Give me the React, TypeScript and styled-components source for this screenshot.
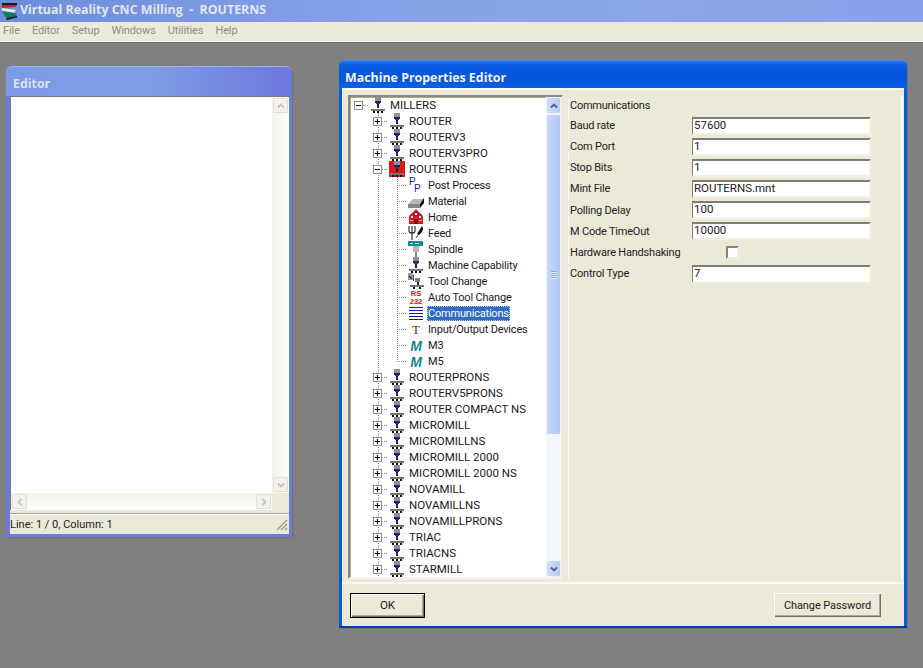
import React from "react";
import styled, { createGlobalStyle, css } from "styled-components";

const UI = `Roboto, "Liberation Sans", Arial, sans-serif`;

const Global = createGlobalStyle`
  html, body { margin: 0; padding: 0; height: 100%; overflow: hidden; }
  body { font-family: ${UI}; font-size: 11px; color: #111; background: #808080; }
  #root { height: 100%; }
`;

const Screen = styled.div`
  width: 923px; height: 668px; display: flex; flex-direction: column; overflow: hidden;
`;
const AppBar = styled.header`
  height: 22px; display: flex; align-items: center; gap: 1px; padding-left: 1px; flex: none;
  background: linear-gradient(to right, #6f8cdc 0%, #86a3e8 45%, #8ba6ea 70%, #87a2e8 100%);
`;
const AppTitle = styled.span`
  font: bold 12.4px "Open Sans", "Liberation Sans", sans-serif; color: #dfe8f8; white-space: pre; margin-bottom: 4px;
`;
const MenuBar = styled.nav`
  height: 18px; flex: none; display: flex; align-items: center; gap: 12px; padding: 0 0 2px 3px; box-sizing: content-box;
  height: 17px; background: #ece9d8; border-bottom: 1px solid #fff; box-shadow: 0 1px 0 #6c6c64;
`;
const MenuItem = styled.span` color: #8f8e85; font-size: 11px; letter-spacing: -0.1px; `;
const Desktop = styled.main` flex: 1; position: relative; background: #808080; margin-top: 1px; `;

const Win = styled.section<{ $x: number; $y: number; $w: number; $h: number }>`
  position: absolute; left: ${p => p.$x}px; top: ${p => p.$y}px; width: ${p => p.$w}px; height: ${p => p.$h}px;
  box-sizing: border-box; display: flex; flex-direction: column;
`;
const EditorWin = styled(Win)`
  background: #6c7bdc; padding: 0 3px 3px 4px; border-radius: 6px 6px 0 0; box-shadow: 1px 1px 1px #70707a;
`;
const EditorTitle = styled.div`
  height: 30px; flex: none; margin: 0 -3px 0 -4px; padding: 4px 0 0 7px; box-sizing: border-box;
  display: flex; align-items: center; border-radius: 6px 6px 0 0;
  font: bold 12.4px "Open Sans", "Liberation Sans", sans-serif; color: #d8e2f6;
  background: linear-gradient(to right, #7d9ae4 0%, #7f9ce6 50%, #6d78dc 100%);
  border-top: 1px solid #9db2ee;
`;
const EditorBody = styled.div`
  flex: 1; display: flex; flex-direction: column; background: #ece9d8; min-height: 0;
`;
const EditArea = styled.div`
  flex: 1; display: grid; grid-template-columns: 1fr 17px; grid-template-rows: 1fr 17px; min-height: 0;
  border-top: 1px solid #77776f; border-left: 1px solid #77776f; background: #fff;
`;
const Paper = styled.div` background: #fff; `;
const PaleTrack = styled.div<{ $horizontal?: boolean }>`
  display: flex; justify-content: space-between; padding: 1px;
  flex-direction: ${p => (p.$horizontal ? "row" : "column")};
  background: ${p => p.$horizontal ? "linear-gradient(#f4f3ec,#fdfdfb)" : "linear-gradient(to right,#f4f3ec,#fdfdfb)"};
`;
const PaleBtn = styled.div`
  width: 15px; height: 15px; box-sizing: border-box; border: 1px solid #e2e0d3; background: #f2f1ea;
  display: flex; align-items: center; justify-content: center; border-radius: 1px;
`;
const Corner = styled.div` background: #ece9d8; `;
const Status = styled.footer`
  height: 20px; flex: none; display: flex; align-items: center; justify-content: space-between;
  padding: 0 1px 0 0; border-top: 1px solid #a5a39a; box-shadow: inset 0 1px 0 #fff; margin-top: 3px;
  font-size: 11px; color: #222; background: #ece9d8;
`;

const DialogWin = styled(Win)`
  background: #0a5ad8; border-radius: 6px 6px 0 0; padding: 0 3px; box-shadow: 1px 1px 0 #707078;
  border-bottom: 2px solid #003aa8;
`;
const DialogTitle = styled.div`
  height: 30px; flex: none; margin: 0 -3px; padding: 4px 0 0 6px; box-sizing: border-box; border-radius: 6px 6px 0 0;
  display: flex; align-items: center; color: #f2f6ff;
  font: bold 12.4px "Open Sans", "Liberation Sans", sans-serif;
  background: linear-gradient(#2a78e8 0%, #0a5fe2 12%, #0454dc 55%, #0a63e6 100%);
  border-top: 1px solid #3c8af0;
`;
const DialogBody = styled.div`
  flex: 1; min-height: 0; background: #ece9d8; display: flex; flex-direction: column;
`;
const Split = styled.div`
  flex: none; display: flex; gap: 5px; padding: 5px 0 3px 6px; border-top: 2px solid #fbfaf3; border-bottom: 2px solid #fbfaf3;
  margin-top: -2px;
`;
const TreeBox = styled.div`
  width: 215px; height: 484px; box-sizing: border-box; flex: none; display: flex;
  background: #fff; border: 2px solid; border-color: #8c8a7e #ece9d8 #f5f4ec #8c8a7e; box-shadow: inset 1px 1px 0 #a8a698;
`;
const TreeList = styled.ul`
  flex: 1; margin: 0; padding: 0; list-style: none; overflow: hidden; min-width: 0;
`;
const Row = styled.li` height: 16px; display: flex; align-items: center; white-space: nowrap; `;
const dotV = css`repeating-linear-gradient(to bottom, #8c8c8c 0 1px, transparent 1px 2px)`;
const dotH = css`repeating-linear-gradient(to right, #8c8c8c 0 1px, transparent 1px 2px)`;
const Cell = styled.span<{ $v?: "full" | "half"; $h?: boolean }>`
  width: 19px; height: 16px; flex: none; display: flex; align-items: center; justify-content: flex-start;
  padding-left: 4px; box-sizing: border-box;
  background-repeat: no-repeat;
  background-image: ${p => (p.$v ? dotV : "none")}, ${p => (p.$h ? dotH : "none")};
  background-size: 1px ${p => (p.$v === "half" ? "8px" : "16px")}, 10px 1px;
  background-position: 9px 0, 9px 8px;
`;
const Expander = styled.span`
  width: 9px; height: 9px; box-sizing: border-box; border: 1px solid #8f8f8f; background: #fff; position: relative;
  &::before { content: ""; position: absolute; left: 1px; right: 1px; top: 3px; height: 1px; background: #000; }
`;
const ExpanderPlus = styled(Expander)`
  &::after { content: ""; position: absolute; top: 1px; bottom: 1px; left: 3px; width: 1px; background: #000; }
`;
const IconSlot = styled.span`
  width: 16px; height: 16px; flex: none; margin-left: 1px; display: flex;
`;
const Label = styled.span<{ $selected?: boolean }>`
  margin-left: ${p => (p.$selected ? "3px" : "4px")};
  font-size: 11.5px; color: #1a1a1a; line-height: 15px;
  ${p => p.$selected && css`
    background: #316ac5; padding: 0 1px; outline: 1px dotted #c8d4ea; outline-offset: -1px;
  `}
`;
const SubLabel = styled(Label)`
  font-size: 11px; letter-spacing: -0.2px;
  ${p => p.$selected && css` color: #fff; `}
`;
const Bar = styled.div`
  width: 15px; flex: none; display: flex; flex-direction: column; margin: 0 0 0 auto; background: #f3f6fd;
`;
const BarBtn = styled.div`
  height: 17px; flex: none; box-sizing: border-box; display: flex; align-items: center; justify-content: center;
  background: linear-gradient(to right, #cfdcfb, #b9cbf6); border: 1px solid #eef3ff; border-radius: 2px;
`;
const Thumb = styled.div`
  height: 321px; flex: none; box-sizing: border-box; background: linear-gradient(to right, #c9d8fb, #b2c7f6);
  border: 1px solid #eef3ff; border-radius: 2px; display: flex; align-items: center; justify-content: center;
`;
const Grip = styled.div`
  width: 6px; height: 8px; background: repeating-linear-gradient(to bottom, #8fa8e6 0 1px, #e6edfd 1px 2px);
`;
const BarSpace = styled.div` flex: 1; `;

const Props = styled.div`
  flex: 1; margin-right: 1px; height: 484px; box-sizing: border-box; padding: 1px 0 0 0;
  border-left: 1px solid #fbfaf3; border-right: 2px solid #fbfaf3;
  display: flex; flex-direction: column;
`;
const PropsHead = styled.div`
  height: 15px; font-size: 11px; letter-spacing: -0.25px; color: #222; display: flex; align-items: center; margin: 2px 0 2px 1px;
`;
const PropRow = styled.div`
  height: 21.15px; display: grid; grid-template-columns: 122px 179px; align-items: center; padding-left: 1px;
  font-size: 11px; letter-spacing: -0.2px; color: #222;
`;
const Field = styled.div`
  height: 18px; box-sizing: border-box; background: #fff; border: 2px solid; border-color: #7f7d72 #f3f1e6 #f3f1e6 #7f7d72;
  padding: 0 0 0 1px; line-height: 13px; font-size: 11.5px; letter-spacing: 0; color: #222; border-left-width: 1px;
`;
const Check = styled.div`
  width: 13px; height: 13px; box-sizing: border-box; margin-left: 34px; background: #fff;
  border: 2px solid; border-color: #85837a #eeece0 #eeece0 #85837a;
`;
const Buttons = styled.div`
  flex: 1; display: flex; align-items: center; justify-content: space-between;
  padding: 0 23px 0 8px;
`;
const OkButton = styled.button`
  width: 75px; height: 25px; background: #ece9d8; border: 1px solid #000; padding: 0; box-sizing: border-box;
  box-shadow: inset 1px 1px 0 #fff, inset -1px -1px 0 #716f64, inset -2px -2px 0 #aca899;
  font: 11.5px ${UI}; color: #222;
`;
const PlainButton = styled.button`
  width: 107px; height: 24px; background: #ece9d8; border: 0; padding: 0; box-sizing: border-box;
  box-shadow: inset 1px 1px 0 #fff, inset -1px -1px 0 #716f64, inset -2px -2px 0 #aca899;
  font: 11px ${UI}; letter-spacing: -0.1px; color: #222;
`;
const ResizeGrip = styled.svg` flex: none; `;

const Caret = ({ dir, color = "#4d6185", pale }: { dir: "up" | "down" | "left" | "right"; color?: string; pale?: boolean }) => {
  const d = { up: "M2 6.5 L5 3.5 L8 6.5", down: "M2 3.5 L5 6.5 L8 3.5", left: "M6.5 2 L3.5 5 L6.5 8", right: "M3.5 2 L6.5 5 L3.5 8" }[dir];
  return (
    <svg width="10" height="10" viewBox="0 0 10 10">
      <path d={d} fill="none" stroke={pale ? "#c5c4bc" : color} strokeWidth="1.8" />
    </svg>
  );
};

const Machine = ({ red }: { red?: boolean }) => (
  <svg width="16" height="16" viewBox="0 0 16 16">
    {red && <rect x="0" y="0" width="16" height="16" fill="#e01818" />}
    <rect x="5" y="0" width="6" height="4" fill="#8e8e96" />
    <rect x="5" y="4" width="6" height="2" fill="#1c1c8c" />
    <rect x="6" y="6" width="4" height="1" fill="#444" />
    <rect x="7" y="7" width="2" height="4" fill="#222" />
    <rect x="1" y="12" width="14" height="2" fill="#77776e" />
    <rect x="3" y="14" width="2" height="2" fill="#111" />
    <rect x="7" y="14" width="2" height="2" fill="#111" />
    <rect x="11" y="14" width="2" height="2" fill="#111" />
  </svg>
);

const SubIcon = ({ kind }: { kind: string }) => {
  switch (kind) {
    case "pp":
      return (
        <svg width="16" height="16" viewBox="0 0 16 16">
          <text x="1" y="8" fontFamily="Liberation Sans" fontSize="10" fill="#1a1aa8">P</text>
          <text x="6" y="15" fontFamily="Liberation Sans" fontSize="10" fill="#1a1aa8">P</text>
        </svg>
      );
    case "material":
      return (
        <svg width="16" height="16" viewBox="0 0 16 16">
          <path d="M0 11 L5 6 H16 L12 11 Z" fill="#b8b8b8" />
          <path d="M0 11 H12 V15 H0 Z" fill="#858585" />
          <path d="M12 11 L16 5 V10 L12 15 Z" fill="#000" />
        </svg>
      );
    case "home":
      return (
        <svg width="16" height="16" viewBox="0 0 16 16">
          <path d="M1 7 L8 0 L15 7 V15 H1 Z" fill="#d81820" />
          <rect x="3" y="7" width="2" height="2" fill="#fff" /><rect x="7" y="4" width="2" height="2" fill="#fff" /><rect x="11" y="7" width="2" height="2" fill="#fff" />
          <rect x="6.5" y="10" width="3" height="5" fill="#701010" />
          <rect x="2" y="11" width="3" height="1" fill="#ffb0b0" /><rect x="11" y="11" width="3" height="1" fill="#ffb0b0" />
        </svg>
      );
    case "feed":
      return (
        <svg width="16" height="16" viewBox="0 0 16 16">
          <path d="M1 1 V6 Q1 8 4 8 Q7 8 7 6 V1 M4 1 V15" fill="none" stroke="#222" strokeWidth="1.1" />
          <path d="M9 9 L14 1 Q17 5 11 10 Z" fill="#111" />
          <path d="M10 10 L8 13" stroke="#444" strokeWidth="1" />
        </svg>
      );
    case "spindle":
      return (
        <svg width="16" height="16" viewBox="0 0 16 16">
          <rect x="0" y="0" width="15" height="5" fill="#10908c" />
          <rect x="2" y="2" width="3" height="1" fill="#c8f0ec" /><rect x="7" y="2" width="4" height="1" fill="#c8f0ec" />
          <rect x="5" y="5" width="6" height="6" fill="#b4b4b4" />
          <rect x="7" y="11" width="2" height="5" fill="#8a8a8a" />
        </svg>
      );
    case "tool":
      return (
        <svg width="16" height="16" viewBox="0 0 16 16">
          <rect x="0" y="0" width="5" height="7" fill="#9a9aa0" />
          <path d="M1 3 L4 6" stroke="#1c1c8c" strokeWidth="1.2" />
          <rect x="5" y="2" width="1" height="6" fill="#555" />
          <rect x="7" y="5" width="5" height="4" fill="#7c7c84" />
          <rect x="9" y="9" width="2" height="3" fill="#222" />
          <rect x="2" y="12" width="14" height="2" fill="#77776e" />
          <rect x="5" y="14" width="2" height="2" fill="#111" /><rect x="11" y="14" width="2" height="2" fill="#111" />
        </svg>
      );
    case "rs":
      return (
        <svg width="16" height="16" viewBox="0 0 16 16">
          <text x="8" y="7" textAnchor="middle" fontFamily="Liberation Sans" fontWeight="bold" fontSize="7.5" fill="#c01818">RS</text>
          <text x="8" y="14.5" textAnchor="middle" fontFamily="Liberation Sans" fontWeight="bold" fontSize="7.5" fill="#c01818">232</text>
        </svg>
      );
    case "comm":
      return (
        <svg width="16" height="16" viewBox="0 0 16 16">
          <path d="M1 2.5H15M1 5.5H15M1 8.5H15M1 11.5H15M1 14.5H15" stroke="#1a1aa8" strokeWidth="1" />
        </svg>
      );
    case "io":
      return (
        <svg width="16" height="16" viewBox="0 0 16 16">
          <text x="8" y="13" textAnchor="middle" fontFamily="Liberation Serif" fontSize="13" fill="#7a2410">T</text>
        </svg>
      );
    case "m":
      return (
        <svg width="16" height="16" viewBox="0 0 16 16">
          <text x="8" y="13.5" textAnchor="middle" fontFamily="Liberation Sans" fontWeight="bold" fontStyle="italic" fontSize="14" fill="#0c8a84">M</text>
        </svg>
      );
    default:
      return <Machine />;
  }
};

const AppIcon = () => (
  <svg width="18" height="18" viewBox="0 0 18 18">
    <path d="M1 1 L16 1 L16 3 L1 4 Z" fill="#1a1a1a" />
    <path d="M1 3 L16 3 L14 5 L1 6 Z" fill="#b03030" />
    <path d="M1 6 L15 8 L13 11 L1 9 Z" fill="#e8e8e8" />
    <path d="M1 9 L14 11 L16 14 L5 16 Z" fill="#0f7f60" />
    <path d="M5 16 L16 14 L16 15.5 L6 18 Z" fill="#122" />
  </svg>
);

const machinesBefore = ["ROUTER", "ROUTERV3", "ROUTERV3PRO"];
const subs: [string, string][] = [
  ["pp", "Post Process"], ["material", "Material"], ["home", "Home"], ["feed", "Feed"], ["spindle", "Spindle"],
  ["machine", "Machine Capability"], ["tool", "Tool Change"], ["rs", "Auto Tool Change"], ["comm", "Communications"],
  ["io", "Input/Output Devices"], ["m", "M3"], ["m", "M5"],
];
const machinesAfter = [
  "ROUTERPRONS", "ROUTERV5PRONS", "ROUTER COMPACT NS", "MICROMILL", "MICROMILLNS", "MICROMILL 2000",
  "MICROMILL 2000 NS", "NOVAMILL", "NOVAMILLNS", "NOVAMILLPRONS", "TRIAC", "TRIACNS", "STARMILL",
];
const props: [string, string | null][] = [
  ["Baud rate", "57600"], ["Com Port", "1"], ["Stop Bits", "1"], ["Mint File", "ROUTERNS.mnt"],
  ["Polling Delay", "100"], ["M Code TimeOut", "10000"], ["Hardware Handshaking", null], ["Control Type", "7"],
];

const MachineRow = ({ name }: { name: string }) => (
  <Row>
    <Cell />
    <Cell $v="full" $h><ExpanderPlus /></Cell>
    <IconSlot><Machine /></IconSlot>
    <Label>{name}</Label>
  </Row>
);

export default function App() {
  return (
    <Screen>
      <Global />
      <AppBar>
        <AppIcon />
        <AppTitle>Virtual Reality CNC Milling  -  ROUTERNS</AppTitle>
      </AppBar>
      <MenuBar>
        {["File", "Editor", "Setup", "Windows", "Utilities", "Help"].map(m => <MenuItem key={m}>{m}</MenuItem>)}
      </MenuBar>
      <Desktop>
        <EditorWin $x={6} $y={23} $w={286} $h={471}>
          <EditorTitle>Editor</EditorTitle>
          <EditorBody>
            <EditArea>
              <Paper />
              <PaleTrack>
                <PaleBtn><Caret dir="up" pale /></PaleBtn>
                <PaleBtn><Caret dir="down" pale /></PaleBtn>
              </PaleTrack>
              <PaleTrack $horizontal>
                <PaleBtn><Caret dir="left" pale /></PaleBtn>
                <PaleBtn><Caret dir="right" pale /></PaleBtn>
              </PaleTrack>
              <Corner />
            </EditArea>
            <Status>
              <span>Line: 1 / 0, Column: 1</span>
              <ResizeGrip width="13" height="13" viewBox="0 0 13 13">
                <path d="M12 2 L2 12 M12 6 L6 12 M12 10 L10 12" stroke="#9a988c" strokeWidth="1.2" />
              </ResizeGrip>
            </Status>
          </EditorBody>
        </EditorWin>

        <DialogWin $x={339} $y={17} $w={568} $h={568}>
          <DialogTitle>Machine Properties Editor</DialogTitle>
          <DialogBody>
            <Split>
              <TreeBox>
                <TreeList>
                  <Row>
                    <Cell $h><Expander /></Cell>
                    <IconSlot><Machine /></IconSlot>
                    <Label>MILLERS</Label>
                  </Row>
                  {machinesBefore.map(n => <MachineRow key={n} name={n} />)}
                  <Row>
                    <Cell />
                    <Cell $v="full" $h><Expander /></Cell>
                    <IconSlot><Machine red /></IconSlot>
                    <Label>ROUTERNS</Label>
                  </Row>
                  {subs.map(([k, n], i) => (
                    <Row key={n}>
                      <Cell />
                      <Cell $v="full" />
                      <Cell $v={i === subs.length - 1 ? "half" : "full"} $h />
                      <IconSlot><SubIcon kind={k} /></IconSlot>
                      <SubLabel $selected={n === "Communications"}>{n}</SubLabel>
                    </Row>
                  ))}
                  {machinesAfter.map(n => <MachineRow key={n} name={n} />)}
                </TreeList>
                <Bar>
                  <BarBtn><Caret dir="up" /></BarBtn>
                  <Thumb><Grip /></Thumb>
                  <BarSpace />
                  <BarBtn><Caret dir="down" /></BarBtn>
                </Bar>
              </TreeBox>
              <Props>
                <PropsHead>Communications</PropsHead>
                {props.map(([label, value]) => (
                  <PropRow key={label}>
                    <span>{label}</span>
                    {value === null ? <Check /> : <Field>{value}</Field>}
                  </PropRow>
                ))}
              </Props>
            </Split>
            <Buttons>
              <OkButton>OK</OkButton>
              <PlainButton>Change Password</PlainButton>
            </Buttons>
          </DialogBody>
        </DialogWin>
      </Desktop>
    </Screen>
  );
}
